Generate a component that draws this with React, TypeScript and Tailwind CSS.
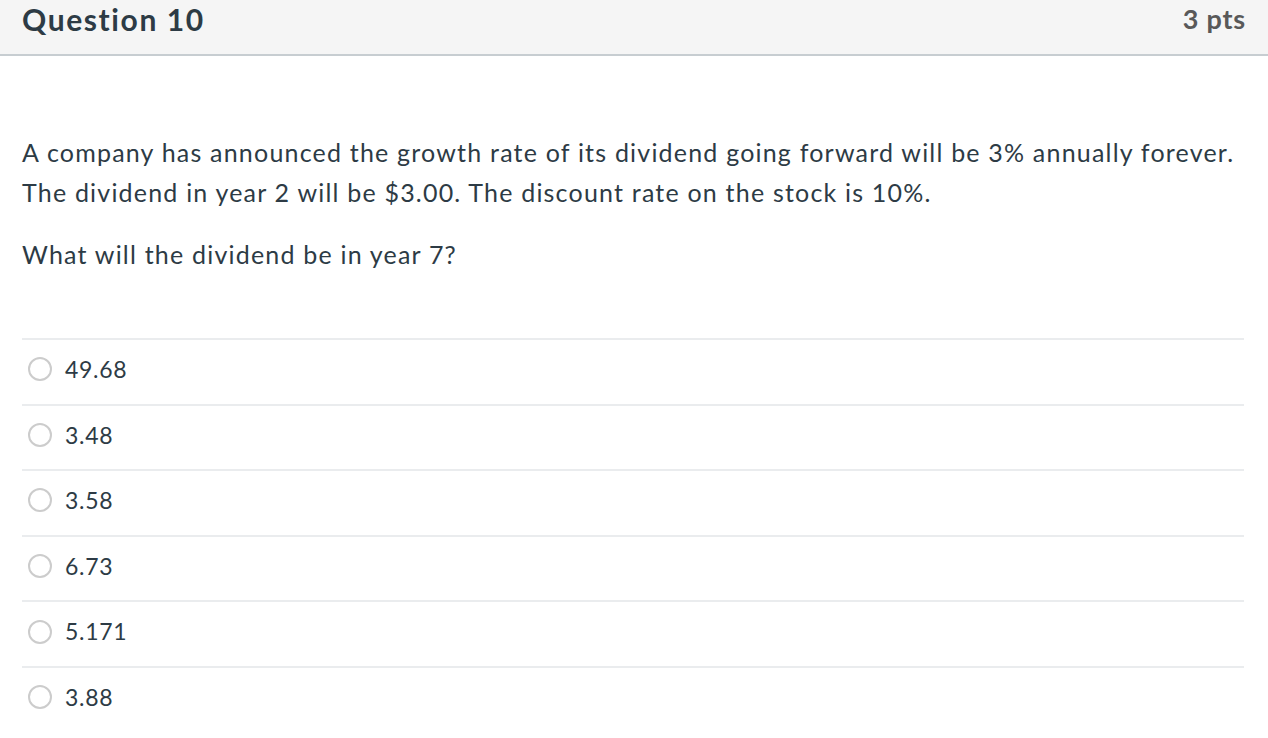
const answers = ["49.68", "3.48", "3.58", "6.73", "5.171", "3.88"]

export default function App() {
  return (
    <div className="min-h-[738px] bg-white text-[#2d3b45]" style={{ fontFamily: "Lato, 'Open Sans', sans-serif" }}>
      <div className="h-[56px] bg-[#f5f5f5] border-b-2 border-[#c7cdd1] flex items-center justify-between px-[22px] pb-[16px]">
        <h2 className="text-[30px] font-bold text-[#2d3b45] tracking-[1.6px]">Question 10</h2>
        <span className="text-[27px] font-bold text-[#595959] tracking-[0.8px]">3 pts</span>
      </div>
      <div className="px-[22px] pt-[76px]">
        <p className="text-[25px] leading-[40px] tracking-[1.2px] whitespace-nowrap">
          A company has announced the growth rate of its dividend going forward will be 3% annually forever.
          <br />
          The dividend in year 2 will be $3.00. The discount rate on the stock is 10%.
        </p>
        <p className="text-[25px] leading-[40px] tracking-[1.2px] mt-[22px]">What will the dividend be in year 7?</p>
        <div className="mt-[64px] mr-[2px]">
          {answers.map((a) => (
            <label key={a} className="flex items-center h-[65.6px] border-t-2 border-[#eaecee] gap-[13px] pl-[6px] pb-[5px]">
              <span className="w-[24px] h-[24px] rounded-full border-2 border-[#cccccc] bg-white" />
              <span className="text-[23px] text-[#2d3b45] tracking-[0.7px]">{a}</span>
            </label>
          ))}
        </div>
      </div>
    </div>
  )
}
